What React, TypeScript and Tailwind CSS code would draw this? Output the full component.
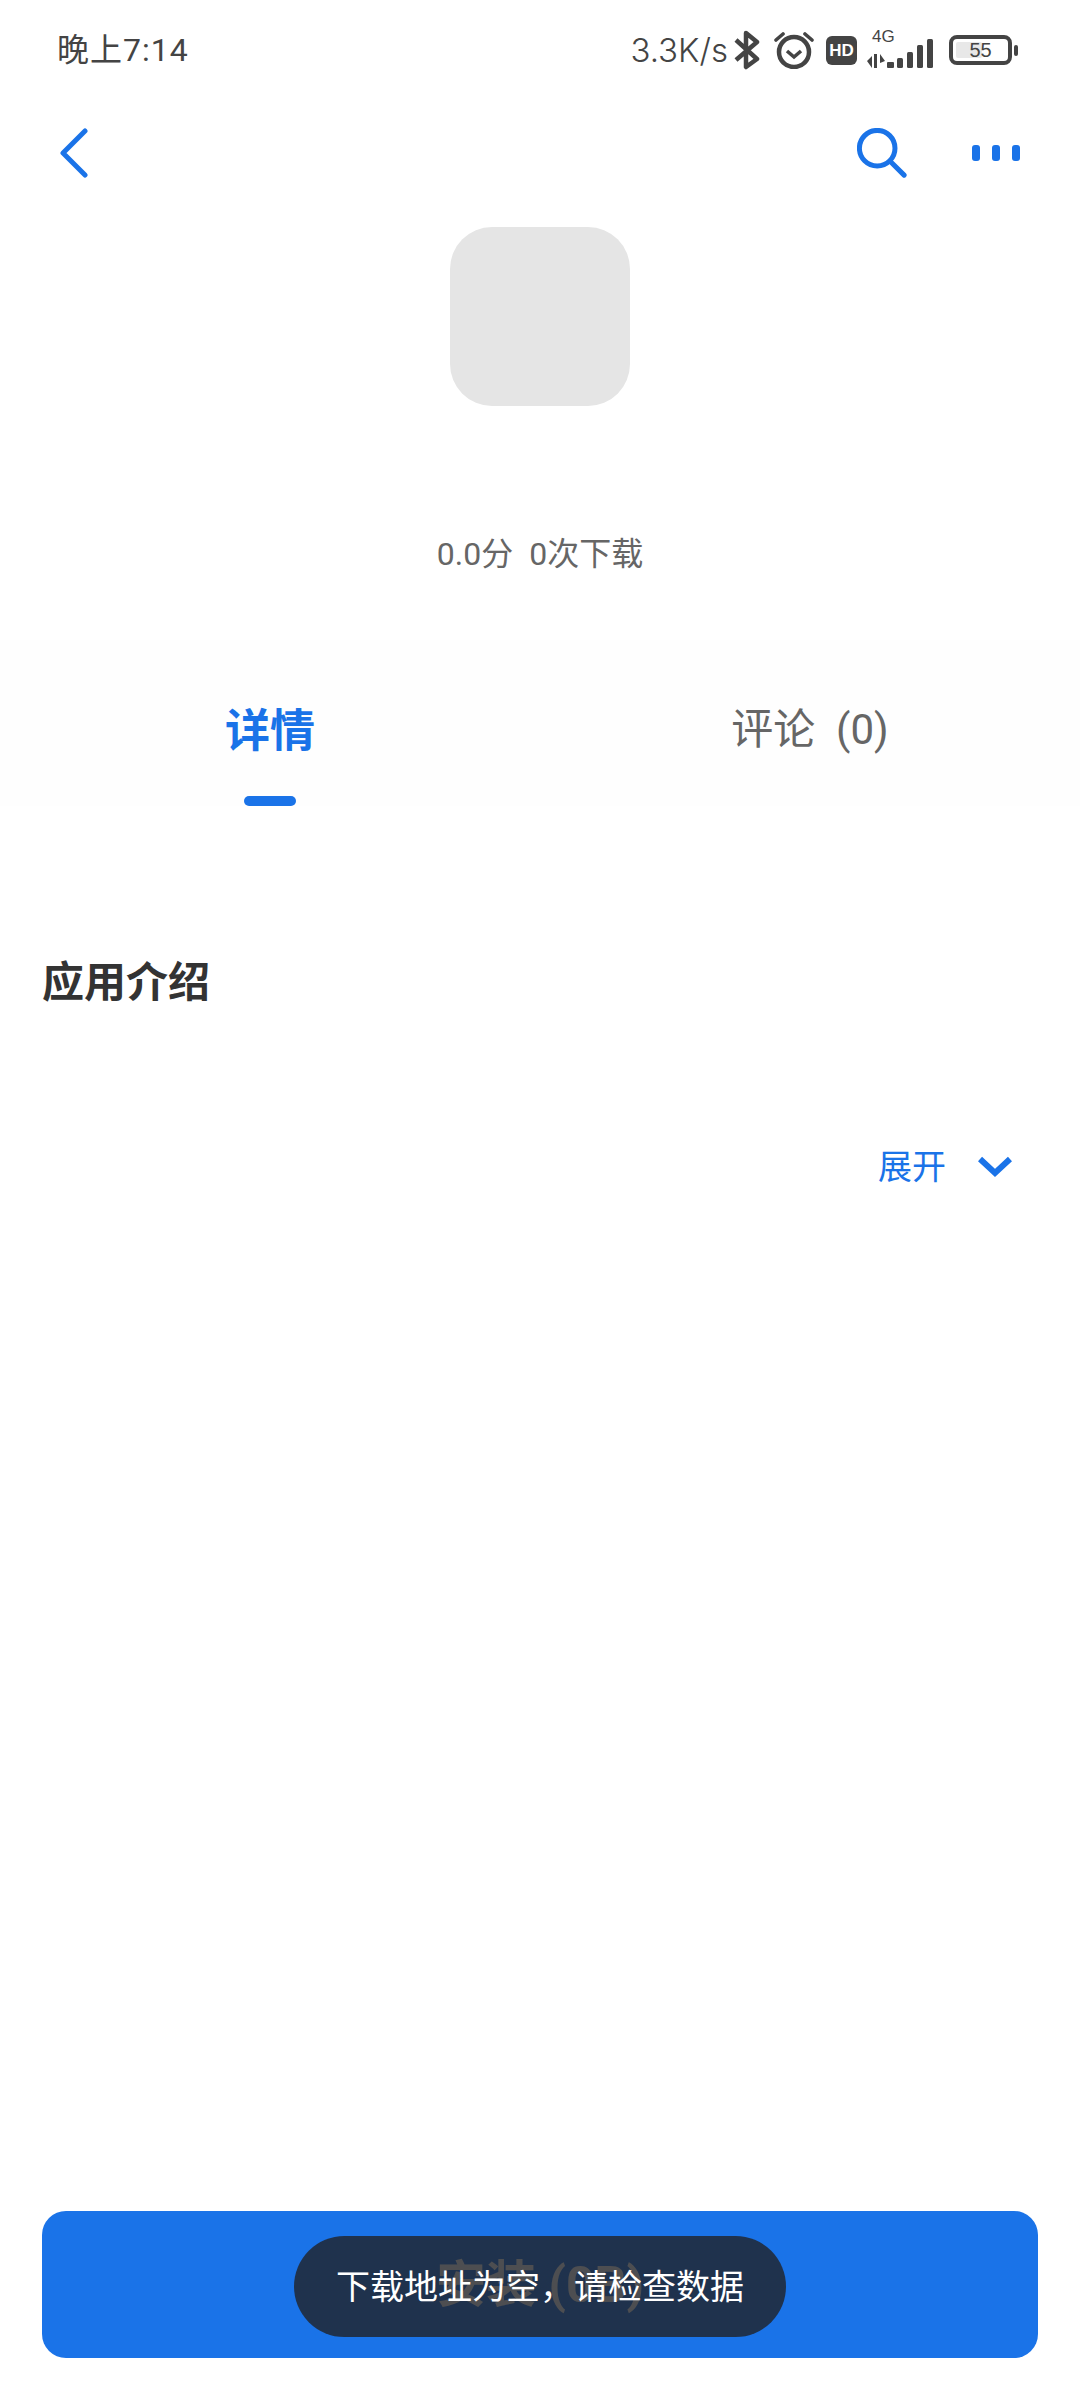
const BLUE = "#1a73e8";
const CJK = "font-['Roboto','Noto_Sans_CJK_SC',sans-serif]";

function StatusIcons() {
  return (
    <div className="flex items-center">
      <span className="mr-[6px] text-[33px] leading-none text-[#444] font-['Inter','Noto_Sans',sans-serif] font-light">3.3K/s</span>
      {/* bluetooth */}
      <svg width="26" height="40" viewBox="0 0 26 40" fill="none" stroke="#444" strokeWidth="4.5" strokeLinejoin="round" className="mr-[14px]">
        <path d="M2 10 L23 29 L12 37 V3 L23 12 L2 30" />
      </svg>
      {/* alarm */}
      <svg width="40" height="38" viewBox="0 0 40 38" fill="none" stroke="#444" className="mr-[12px]">
        <circle cx="20" cy="21" r="15" strokeWidth="4.5" />
        <path d="M13 20 L20 26 L27 20" strokeWidth="3.6" />
        <path d="M2 9 L9 3 M31 3 L38 9" strokeWidth="3.6" strokeLinecap="round" />
      </svg>
      {/* HD */}
      <div className="mr-[10px] flex h-[29px] w-[31px] items-center justify-center rounded-[6px] bg-[#444] text-[17px] font-black leading-none text-white font-['Liberation_Sans',sans-serif]">HD</div>
      {/* signal */}
      <div className="relative mr-[14px] h-[38px] w-[68px]">
        <span className="absolute left-[5px] top-[-3px] text-[17px] leading-none text-[#444] font-['Liberation_Sans',sans-serif]">4G</span>
        <svg width="68" height="38" viewBox="0 0 68 38" fill="#444">
          <path d="M0 30 L5 25 V37 Z M7 23 H10 V37 H7 Z M13 23 L18 30 L13 32 V37 Z" />
          <rect x="20" y="31" width="7" height="6" rx="1" />
          <rect x="30" y="27" width="6" height="10" rx="1.5" />
          <rect x="40" y="21" width="6" height="16" rx="1.5" />
          <rect x="50" y="14" width="6" height="23" rx="1.5" />
          <rect x="60" y="8" width="6" height="29" rx="1.5" />
        </svg>
      </div>
      {/* battery */}
      <div className="relative flex h-[30px] w-[63px] items-center rounded-[8px] border-[4px] border-[#444] p-[3px]">
        <div className="h-full w-[26px] rounded-[2px] bg-[#e8e8e8]" />
        <span className="absolute inset-0 flex items-center justify-center text-[20px] leading-none text-[#444] font-['Liberation_Sans',sans-serif]">55</span>
      </div>
      <div className="ml-[2px] h-[11px] w-[4px] rounded-[2px] bg-[#444]" />
    </div>
  );
}

export default function App() {
  return (
    <div className={`relative flex h-[2400px] w-[1080px] flex-col overflow-hidden bg-white ${CJK}`}>
      <div className="flex h-[100px] items-center justify-between pl-[57px] pr-[62px]">
        <span className="text-[32px] leading-none tracking-[1px] text-[#444]">晚上7:14</span>
        <StatusIcons />
      </div>

      <div className="flex h-[106px] items-center justify-between pl-[59px] pr-[60px]">
        <svg width="30" height="50" viewBox="0 0 30 50" fill="none" stroke={BLUE} strokeWidth="5" strokeLinecap="round" strokeLinejoin="round">
          <path d="M26 3 L4 25 L26 47" />
        </svg>
        <div className="flex items-center gap-[65px]">
          <svg width="50" height="50" viewBox="0 0 52 52" fill="none" stroke={BLUE} strokeWidth="5.2" strokeLinecap="round">
            <circle cx="21" cy="21" r="18.5" />
            <path d="M35 35 L49 49" />
          </svg>
          <div className="flex gap-[12px]">
            <div className="h-[16px] w-[8px] rounded-[3px] bg-[#1a73e8]" />
            <div className="h-[16px] w-[8px] rounded-[3px] bg-[#1a73e8]" />
            <div className="h-[16px] w-[8px] rounded-[3px] bg-[#1a73e8]" />
          </div>
        </div>
      </div>

      <div className="mt-[21px] h-[179px] w-[180px] self-center rounded-[42px] bg-[#e5e5e5]" />

      <div className="mt-[128px] text-center text-[32px] leading-[40px] text-[#666]">0.0分&nbsp;&nbsp;0次下载</div>

      <div className="mt-[66px] flex h-[166px] bg-[#fefefe]">
        <div className="flex w-[540px] flex-col items-center pt-[62px]">
          <span className="text-[45px] font-bold leading-[60px] text-[#1a73e8]">详情</span>
          <div className="mt-[34px] h-[10px] w-[52px] rounded-full bg-[#1a73e8]" />
        </div>
        <div className="flex w-[540px] justify-center pt-[60px]">
          <span className="whitespace-pre text-[42px] leading-[60px] text-[#666]">评论  (0)</span>
        </div>
      </div>

      <h2 className="mt-[149px] pl-[42px] text-[42px] font-bold leading-[56px] text-[#333]">应用介绍</h2>

      <div className="mt-[133px] flex items-center justify-end pr-[66px]">
        <span className="text-[34px] leading-[46px] text-[#1a73e8]">展开</span>
        <svg width="34" height="22" viewBox="0 0 34 22" fill="none" stroke={BLUE} strokeWidth="6" className="ml-[34px] -translate-x-[2px]">
          <path d="M2 3 L17 17 L32 3" />
        </svg>
      </div>

      <div className="mx-[42px] mb-[42px] mt-auto flex h-[147px] items-center justify-center rounded-[24px] bg-[#1a73e8]">
        <span className="text-[50px] font-bold leading-none text-white">安装 (0B)</span>
      </div>

      <div className="absolute left-[294px] top-[2236px] flex h-[101px] w-[492px] items-center justify-center rounded-full bg-[#202226]/80 text-[34px] leading-none text-white">
        下载地址为空，请检查数据
      </div>
    </div>
  );
}
